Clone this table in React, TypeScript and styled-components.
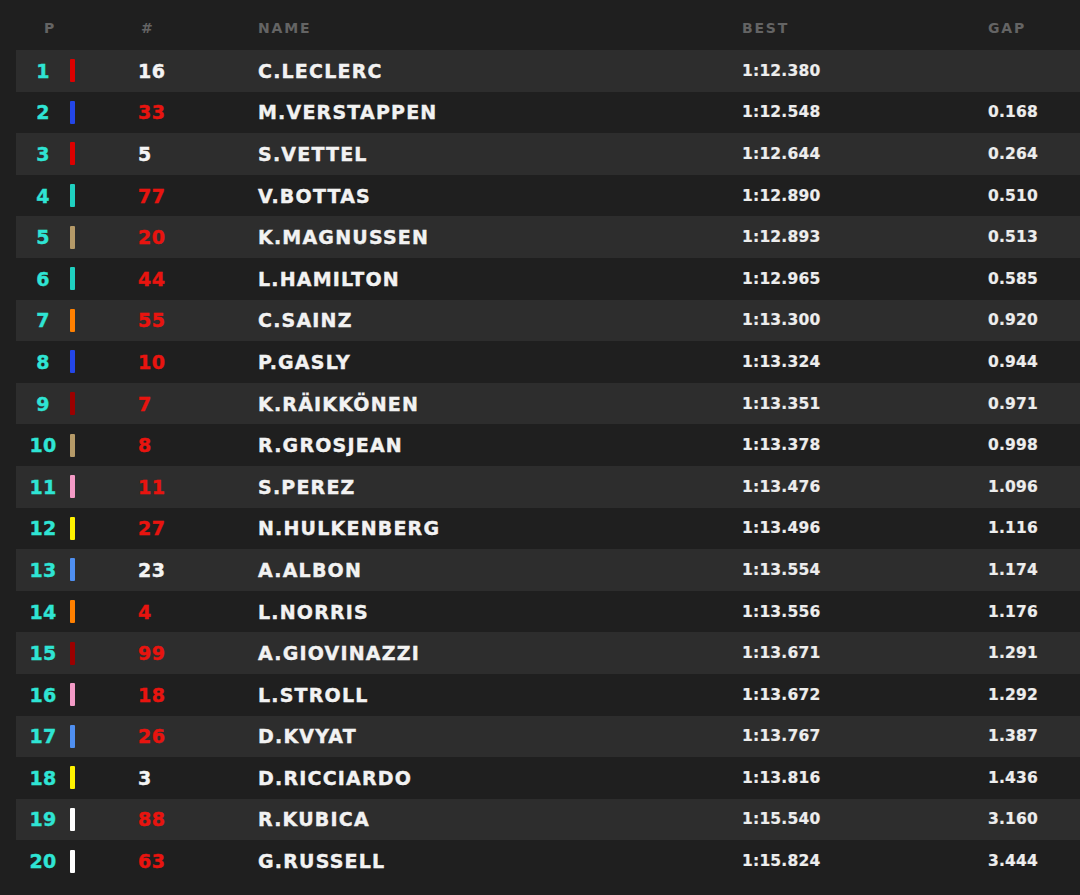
import React, { FC } from 'react';
import styled, { createGlobalStyle } from 'styled-components';

const GlobalStyle = createGlobalStyle`
  html, body {
    margin: 0;
    padding: 0;
    background-color: #1f1f1f;
  }
`;

const teamColors: Record<string, string> = {
  ferrari: '#dc0000',
  redbull: '#2346e8',
  mercedes: '#1fd0c0',
  haas: '#b59a68',
  mclaren: '#ff8000',
  alfa: '#9b0000',
  racingpoint: '#f39ac6',
  renault: '#fff200',
  tororosso: '#4f8ff0',
  williams: '#ffffff',
};

interface Result {
  number: string;
  name: string;
  best: string;
  gap: string;
  team: string;
}

const results: Result[] = [
  { number: '16', name: 'C.LECLERC', best: '1:12.380', gap: '', team: 'ferrari' },
  { number: '33', name: 'M.VERSTAPPEN', best: '1:12.548', gap: '0.168', team: 'redbull' },
  { number: '5', name: 'S.VETTEL', best: '1:12.644', gap: '0.264', team: 'ferrari' },
  { number: '77', name: 'V.BOTTAS', best: '1:12.890', gap: '0.510', team: 'mercedes' },
  { number: '20', name: 'K.MAGNUSSEN', best: '1:12.893', gap: '0.513', team: 'haas' },
  { number: '44', name: 'L.HAMILTON', best: '1:12.965', gap: '0.585', team: 'mercedes' },
  { number: '55', name: 'C.SAINZ', best: '1:13.300', gap: '0.920', team: 'mclaren' },
  { number: '10', name: 'P.GASLY', best: '1:13.324', gap: '0.944', team: 'redbull' },
  { number: '7', name: 'K.RÄIKKÖNEN', best: '1:13.351', gap: '0.971', team: 'alfa' },
  { number: '8', name: 'R.GROSJEAN', best: '1:13.378', gap: '0.998', team: 'haas' },
  { number: '11', name: 'S.PEREZ', best: '1:13.476', gap: '1.096', team: 'racingpoint' },
  { number: '27', name: 'N.HULKENBERG', best: '1:13.496', gap: '1.116', team: 'renault' },
  { number: '23', name: 'A.ALBON', best: '1:13.554', gap: '1.174', team: 'tororosso' },
  { number: '4', name: 'L.NORRIS', best: '1:13.556', gap: '1.176', team: 'mclaren' },
  { number: '99', name: 'A.GIOVINAZZI', best: '1:13.671', gap: '1.291', team: 'alfa' },
  { number: '18', name: 'L.STROLL', best: '1:13.672', gap: '1.292', team: 'racingpoint' },
  { number: '26', name: 'D.KVYAT', best: '1:13.767', gap: '1.387', team: 'tororosso' },
  { number: '3', name: 'D.RICCIARDO', best: '1:13.816', gap: '1.436', team: 'renault' },
  { number: '88', name: 'R.KUBICA', best: '1:15.540', gap: '3.160', team: 'williams' },
  { number: '63', name: 'G.RUSSELL', best: '1:15.824', gap: '3.444', team: 'williams' },
];

// numbers printed in white on the timing screen
const whiteNumbers = ['16', '5', '23', '3'];

const COLUMNS = '54px 68px 120px 484px 246px 1fr';

const Page = styled.div`
  font-family: 'DejaVu Sans', 'Liberation Sans', sans-serif;
  font-weight: bold;
  padding-left: 16px;
  min-height: 895px;
  box-sizing: border-box;
`;

const HeaderRow = styled.div`
  display: grid;
  grid-template-columns: ${COLUMNS};
  align-items: center;
  height: 50px;
  padding-top: 6px;
  box-sizing: border-box;
`;

const HeaderCell = styled.div<{ $center?: boolean; $offset?: number }>`
  color: #646464;
  font-size: 14px;
  letter-spacing: 1.8px;
  text-align: ${({ $center }) => ($center ? 'center' : 'left')};
  padding-left: ${({ $offset }) => $offset || 0}px;
`;

const Row = styled.div<{ $shaded: boolean }>`
  display: grid;
  grid-template-columns: ${COLUMNS};
  align-items: center;
  height: 41.6px;
  background-color: ${({ $shaded }) => ($shaded ? '#2d2d2d' : 'transparent')};
`;

const Position = styled.div`
  color: #2fe4d4;
  font-size: 19px;
  text-align: center;
  letter-spacing: 0.3px;
  -webkit-text-stroke: 0.4px #2fe4d4;
`;

const TeamBar = styled.div<{ $color: string }>`
  width: 5px;
  height: 23px;
  border-radius: 1px;
  background-color: ${({ $color }) => $color};
`;

const CarNumber = styled.div<{ $white: boolean }>`
  color: ${({ $white }) => ($white ? '#f4f4f4' : '#e8140f')};
  font-size: 19px;
  letter-spacing: 0.5px;
  -webkit-text-stroke: 0.4px ${({ $white }) => ($white ? '#f4f4f4' : '#e8140f')};
`;

const DriverName = styled.div`
  color: #f2f2f2;
  font-size: 19px;
  letter-spacing: 1.2px;
  -webkit-text-stroke: 0.4px #f2f2f2;
`;

const Time = styled.div`
  color: #ededed;
  font-size: 15.5px;
  letter-spacing: 0.2px;
  -webkit-text-stroke: 0.2px #ededed;
`;

const App: FC = () => (
  <>
    <GlobalStyle />
    <Page>
      <HeaderRow>
        <HeaderCell $center $offset={14}>P</HeaderCell>
        <div />
        <HeaderCell $offset={3}>#</HeaderCell>
        <HeaderCell>NAME</HeaderCell>
        <HeaderCell>BEST</HeaderCell>
        <HeaderCell>GAP</HeaderCell>
      </HeaderRow>
      {results.map((r, i) => (
        <Row key={r.name} $shaded={i % 2 === 0}>
          <Position>{i + 1}</Position>
          <TeamBar $color={teamColors[r.team]} />
          <CarNumber $white={whiteNumbers.includes(r.number)}>{r.number}</CarNumber>
          <DriverName>{r.name}</DriverName>
          <Time>{r.best}</Time>
          <Time>{r.gap}</Time>
        </Row>
      ))}
    </Page>
  </>
);

export default App;
